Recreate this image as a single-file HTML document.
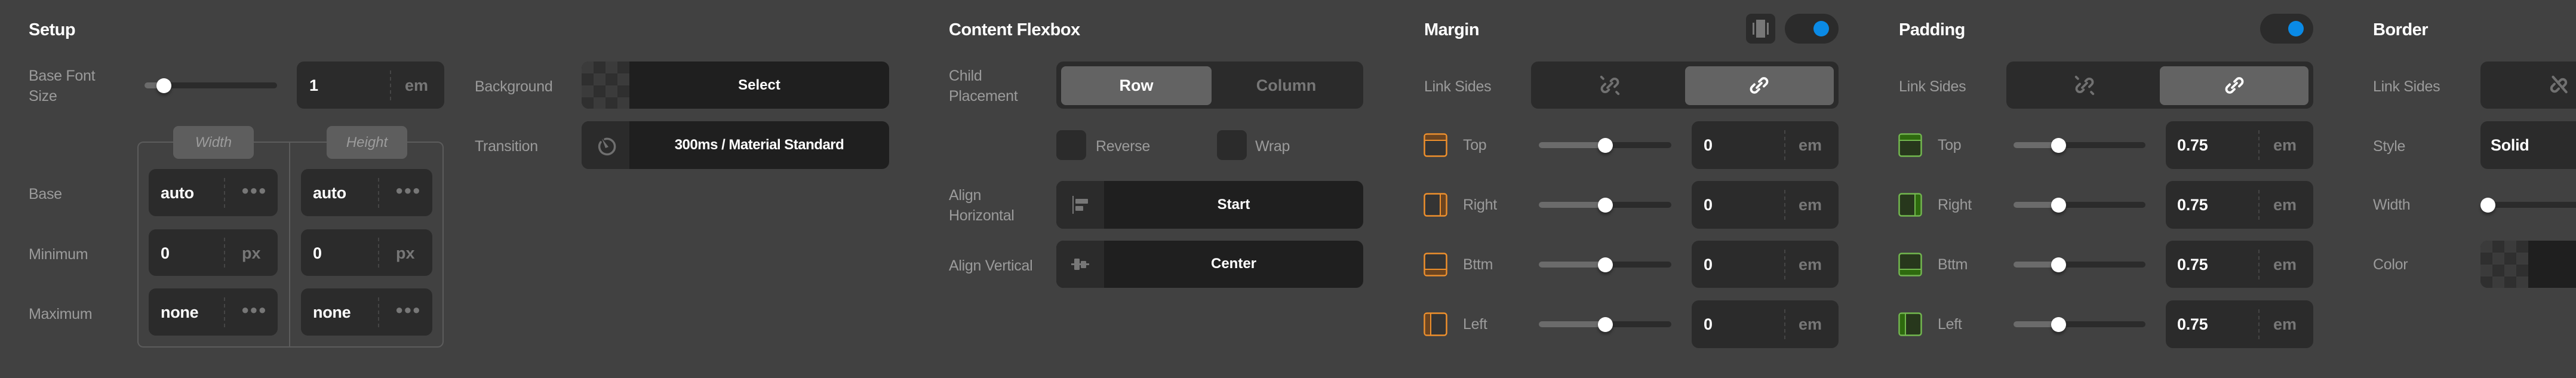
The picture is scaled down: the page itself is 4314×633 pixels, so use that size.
<!DOCTYPE html>
<html><head><meta charset="utf-8">
<style>
*{margin:0;padding:0;box-sizing:border-box}
html,body{width:4314px;height:633px;overflow:hidden;background:#414141;font-family:"Liberation Sans",sans-serif}
.a{position:absolute}
.t{position:absolute;color:#fff;font-weight:bold;font-size:29px;line-height:34px;top:33px;letter-spacing:-0.5px}
.l{position:absolute;color:#9b9b9b;font-size:25px;line-height:34px;letter-spacing:-0.3px;white-space:nowrap}
.box{position:absolute;background:#2b2b2b;border-radius:12px}
.dk{position:absolute;background:#1f1f1f;border-radius:12px;overflow:hidden}
.v{position:absolute;color:#fff;font-weight:bold;font-size:27px;line-height:34px;letter-spacing:-0.3px}
.u{position:absolute;color:#777;font-weight:bold;font-size:27px;line-height:34px}
.dots{position:absolute;color:#777;font-size:22px;line-height:34px;letter-spacing:1px}
.dv{position:absolute;width:0;border-left:2px dashed #454545}
.tr{position:absolute;height:10px;border-radius:5px;background:#2b2b2b;overflow:hidden}
.fi{position:absolute;left:0;top:0;height:10px;background:#6b6b6b}
.th{position:absolute;width:25px;height:25px;border-radius:50%;background:#fff;box-shadow:0 4px 5px rgba(0,0,0,.35)}
.ck{background:repeating-conic-gradient(#2f2f2f 0 25%,#3b3b3b 0 50%) 0 0/40px 40px}
.ctr{position:absolute;color:#fff;font-weight:bold;font-size:24px;line-height:34px;text-align:center;white-space:nowrap}
</style></head><body>

<!-- SETUP -->
<div class="t" style="left:48px">Setup</div>
<div class="l" style="left:48px;top:110px">Base Font<br>Size</div>
<div class="tr" style="left:242px;top:138px;width:222px"><div class="fi" style="width:32px"></div></div>
<div class="th" style="left:262px;top:131px"></div>
<div class="box" style="left:497px;top:103px;width:247px;height:79px"></div>
<div class="v" style="left:518px;top:126px">1</div>
<div class="dv" style="left:653px;top:118px;height:50px"></div>
<div class="u" style="left:678px;top:126px">em</div>

<div class="a" style="left:230px;top:237px;width:513px;height:345px;border:2px solid #5c5c5c;border-radius:10px"></div>
<div class="a" style="left:484px;top:237px;width:2px;height:345px;background:#5c5c5c"></div>
<div class="a" style="left:290px;top:211px;width:135px;height:55px;background:#5e5e5e;border-radius:9px;color:#9c9c9c;font-style:italic;font-size:24px;line-height:55px;text-align:center">Width</div>
<div class="a" style="left:547px;top:211px;width:135px;height:55px;background:#5e5e5e;border-radius:9px;color:#9c9c9c;font-style:italic;font-size:24px;line-height:55px;text-align:center">Height</div>

<div class="l" style="left:48px;top:308px">Base</div>
<div class="l" style="left:48px;top:409px">Minimum</div>
<div class="l" style="left:48px;top:509px">Maximum</div>

<div class="box" style="left:249px;top:283px;width:216px;height:79px"></div>
<div class="v" style="left:269px;top:306px">auto</div><div class="dv" style="left:375px;top:298px;height:50px"></div><div class="dots" style="left:404px;top:302px">●●●</div>
<div class="box" style="left:504px;top:283px;width:220px;height:79px"></div>
<div class="v" style="left:524px;top:306px">auto</div><div class="dv" style="left:633px;top:298px;height:50px"></div><div class="dots" style="left:662px;top:302px">●●●</div>

<div class="box" style="left:249px;top:384px;width:216px;height:78px"></div>
<div class="v" style="left:269px;top:407px">0</div><div class="dv" style="left:375px;top:398px;height:50px"></div><div class="u" style="left:405px;top:407px">px</div>
<div class="box" style="left:504px;top:384px;width:220px;height:78px"></div>
<div class="v" style="left:524px;top:407px">0</div><div class="dv" style="left:633px;top:398px;height:50px"></div><div class="u" style="left:663px;top:407px">px</div>

<div class="box" style="left:249px;top:483px;width:216px;height:79px"></div>
<div class="v" style="left:269px;top:506px">none</div><div class="dv" style="left:375px;top:498px;height:50px"></div><div class="dots" style="left:404px;top:502px">●●●</div>
<div class="box" style="left:504px;top:483px;width:220px;height:79px"></div>
<div class="v" style="left:524px;top:506px">none</div><div class="dv" style="left:633px;top:498px;height:50px"></div><div class="dots" style="left:662px;top:502px">●●●</div>

<div class="l" style="left:795px;top:128px">Background</div>
<div class="dk" style="left:974px;top:103px;width:515px;height:79px"><div class="a ck" style="left:0;top:0;width:80px;height:79px"></div></div>
<div class="ctr" style="left:1054px;top:126px;width:435px">Select</div>
<div class="l" style="left:795px;top:228px">Transition</div>
<div class="dk" style="left:974px;top:203px;width:515px;height:80px"><div class="a" style="left:0;top:0;width:80px;height:80px;background:#2b2b2b"></div></div>
<svg class="a" style="left:996px;top:222px" width="40" height="40" viewBox="0 0 40 40"><path d="M17 11 A13 13 0 1 1 10 16" fill="none" stroke="#6f6f6f" stroke-width="3.5" stroke-linecap="round"/><path d="M12 10 L23 24 L18 26 Z" fill="#6f6f6f"/></svg>
<div class="ctr" style="left:1054px;top:226px;width:435px;letter-spacing:-0.5px">300ms / Material Standard</div>

<!-- CONTENT FLEXBOX -->
<div class="t" style="left:1589px">Content Flexbox</div>
<div class="l" style="left:1589px;top:110px">Child<br>Placement</div>
<div class="box" style="left:1769px;top:103px;width:514px;height:79px"></div>
<div class="a" style="left:1777px;top:111px;width:252px;height:65px;background:#636363;border-radius:8px"></div>
<div class="ctr" style="left:1777px;top:126px;width:252px;font-size:27px">Row</div>
<div class="ctr" style="left:2029px;top:126px;width:250px;font-size:27px;color:#777">Column</div>
<div class="box" style="left:1769px;top:218px;width:50px;height:50px;border-radius:9px"></div>
<div class="l" style="left:1835px;top:228px">Reverse</div>
<div class="box" style="left:2038px;top:218px;width:50px;height:50px;border-radius:9px"></div>
<div class="l" style="left:2102px;top:228px">Wrap</div>

<div class="l" style="left:1589px;top:310px">Align<br>Horizontal</div>
<div class="dk" style="left:1769px;top:303px;width:514px;height:80px"><div class="a" style="left:0;top:0;width:80px;height:80px;background:#2b2b2b"></div></div>
<svg class="a" style="left:1769px;top:303px" width="80" height="80"><rect x="27" y="25" width="2" height="30" fill="#777"/><rect x="32" y="30" width="21" height="8" rx="1" fill="#777"/><rect x="32" y="42" width="13" height="8" rx="1" fill="#777"/></svg>
<div class="ctr" style="left:1849px;top:326px;width:434px">Start</div>
<div class="l" style="left:1589px;top:428px">Align Vertical</div>
<div class="dk" style="left:1769px;top:403px;width:514px;height:79px"><div class="a" style="left:0;top:0;width:80px;height:79px;background:#2b2b2b"></div></div>
<svg class="a" style="left:1769px;top:403px" width="80" height="79"><rect x="25" y="38" width="30" height="3" fill="#777"/><rect x="30" y="30" width="9" height="19" rx="1.5" fill="#777"/><rect x="41" y="34" width="9" height="12" rx="1.5" fill="#777"/></svg>
<div class="ctr" style="left:1849px;top:425px;width:434px">Center</div>

<!-- MARGIN -->
<div class="t" style="left:2385px">Margin</div>
<div class="box" style="left:2924px;top:23px;width:49px;height:50px;border-radius:9px"></div>
<svg class="a" style="left:2924px;top:23px" width="49" height="50"><rect x="11" y="15" width="3" height="20" fill="#777"/><rect x="17" y="10" width="15" height="30" fill="#777"/><rect x="35" y="15" width="3" height="20" fill="#777"/></svg>
<div class="box" style="left:2989px;top:23px;width:90px;height:50px;border-radius:25px"></div>
<div class="a" style="left:3037px;top:35px;width:26px;height:26px;border-radius:50%;background:#0a8ae6"></div>
<div class="l" style="left:2385px;top:128px">Link Sides</div>
<div class="box" style="left:2564px;top:103px;width:515px;height:79px"></div>
<div class="a" style="left:2822px;top:111px;width:249px;height:65px;background:#636363;border-radius:8px"></div>
<svg class="a" style="left:2677px;top:124px" width="38" height="38" viewBox="0 0 24 24" fill="none" stroke="#717171" stroke-width="2.4" stroke-linecap="round"><path d="M13 7.5l1.5-1.5a3.5 3.5 0 0 1 5 5L17 13.5"/><path d="M11 16.5L9.5 18a3.5 3.5 0 0 1-5-5L7 10.5"/><path d="M9.5 14.5l5-5"/><path d="M3 3l2 2M19 19l2 2"/></svg>
<svg class="a" style="left:2927px;top:124px" width="38" height="38" viewBox="0 0 24 24" fill="none" stroke="#fff" stroke-width="2.4" stroke-linecap="round"><path d="M12 8l2.5-2.5a3.5 3.5 0 0 1 5 5L17 13"/><path d="M12 16l-2.5 2.5a3.5 3.5 0 0 1-5-5L7 11"/><path d="M9.5 14.5l5-5"/></svg>

<svg class="a" style="left:2384px;top:223px" width="40" height="40"><rect x="1.5" y="1.5" width="37" height="37" rx="4" fill="#343434" stroke="#ee8f2c" stroke-width="2.5"/><rect x="3" y="3" width="34" height="8" fill="#6b4420"/><rect x="2" y="11" width="36" height="2" fill="#ee8f2c"/></svg>
<svg class="a" style="left:2384px;top:323px" width="40" height="40"><rect x="1.5" y="1.5" width="37" height="37" rx="4" fill="#343434" stroke="#ee8f2c" stroke-width="2.5"/><rect x="29" y="3" width="8" height="34" fill="#6b4420"/><rect x="27" y="2" width="2" height="36" fill="#ee8f2c"/></svg>
<svg class="a" style="left:2384px;top:423px" width="40" height="40"><rect x="1.5" y="1.5" width="37" height="37" rx="4" fill="#343434" stroke="#ee8f2c" stroke-width="2.5"/><rect x="3" y="29" width="34" height="8" fill="#6b4420"/><rect x="2" y="27" width="36" height="2" fill="#ee8f2c"/></svg>
<svg class="a" style="left:2384px;top:523px" width="40" height="40"><rect x="1.5" y="1.5" width="37" height="37" rx="4" fill="#343434" stroke="#ee8f2c" stroke-width="2.5"/><rect x="3" y="3" width="8" height="34" fill="#6b4420"/><rect x="11" y="2" width="2" height="36" fill="#ee8f2c"/></svg>
<div class="l" style="left:2450px;top:226px">Top</div>
<div class="l" style="left:2450px;top:326px">Right</div>
<div class="l" style="left:2450px;top:426px">Bttm</div>
<div class="l" style="left:2450px;top:526px">Left</div>

<div class="tr" style="left:2577px;top:238px;width:222px"><div class="fi" style="width:111px"></div></div><div class="th" style="left:2676px;top:231px"></div>
<div class="tr" style="left:2577px;top:338px;width:222px"><div class="fi" style="width:111px"></div></div><div class="th" style="left:2676px;top:331px"></div>
<div class="tr" style="left:2577px;top:438px;width:222px"><div class="fi" style="width:111px"></div></div><div class="th" style="left:2676px;top:431px"></div>
<div class="tr" style="left:2577px;top:538px;width:222px"><div class="fi" style="width:111px"></div></div><div class="th" style="left:2676px;top:531px"></div>

<div class="box" style="left:2833px;top:203px;width:246px;height:80px"></div><div class="v" style="left:2853px;top:226px">0</div><div class="dv" style="left:2988px;top:218px;height:50px"></div><div class="u" style="left:3012px;top:226px">em</div>
<div class="box" style="left:2833px;top:303px;width:246px;height:80px"></div><div class="v" style="left:2853px;top:326px">0</div><div class="dv" style="left:2988px;top:318px;height:50px"></div><div class="u" style="left:3012px;top:326px">em</div>
<div class="box" style="left:2833px;top:403px;width:246px;height:79px"></div><div class="v" style="left:2853px;top:426px">0</div><div class="dv" style="left:2988px;top:418px;height:50px"></div><div class="u" style="left:3012px;top:426px">em</div>
<div class="box" style="left:2833px;top:503px;width:246px;height:80px"></div><div class="v" style="left:2853px;top:526px">0</div><div class="dv" style="left:2988px;top:518px;height:50px"></div><div class="u" style="left:3012px;top:526px">em</div>

<!-- PADDING -->
<div class="t" style="left:3180px">Padding</div>
<div class="box" style="left:3785px;top:23px;width:89px;height:50px;border-radius:25px"></div>
<div class="a" style="left:3832px;top:35px;width:26px;height:26px;border-radius:50%;background:#0a8ae6"></div>
<div class="l" style="left:3180px;top:128px">Link Sides</div>
<div class="box" style="left:3360px;top:103px;width:514px;height:79px"></div>
<div class="a" style="left:3617px;top:111px;width:249px;height:65px;background:#636363;border-radius:8px"></div>
<svg class="a" style="left:3472px;top:124px" width="38" height="38" viewBox="0 0 24 24" fill="none" stroke="#717171" stroke-width="2.4" stroke-linecap="round"><path d="M13 7.5l1.5-1.5a3.5 3.5 0 0 1 5 5L17 13.5"/><path d="M11 16.5L9.5 18a3.5 3.5 0 0 1-5-5L7 10.5"/><path d="M9.5 14.5l5-5"/><path d="M3 3l2 2M19 19l2 2"/></svg>
<svg class="a" style="left:3723px;top:124px" width="38" height="38" viewBox="0 0 24 24" fill="none" stroke="#fff" stroke-width="2.4" stroke-linecap="round"><path d="M12 8l2.5-2.5a3.5 3.5 0 0 1 5 5L17 13"/><path d="M12 16l-2.5 2.5a3.5 3.5 0 0 1-5-5L7 11"/><path d="M9.5 14.5l5-5"/></svg>

<svg class="a" style="left:3179px;top:223px" width="40" height="40"><rect x="1.5" y="1.5" width="37" height="37" rx="4" fill="#27371c" stroke="#72b84e" stroke-width="2.5"/><rect x="3" y="3" width="34" height="8" fill="#2e6a0e"/><rect x="2" y="11" width="36" height="2" fill="#72b84e"/></svg>
<svg class="a" style="left:3179px;top:323px" width="40" height="40"><rect x="1.5" y="1.5" width="37" height="37" rx="4" fill="#27371c" stroke="#72b84e" stroke-width="2.5"/><rect x="29" y="3" width="8" height="34" fill="#2e6a0e"/><rect x="27" y="2" width="2" height="36" fill="#72b84e"/></svg>
<svg class="a" style="left:3179px;top:423px" width="40" height="40"><rect x="1.5" y="1.5" width="37" height="37" rx="4" fill="#27371c" stroke="#72b84e" stroke-width="2.5"/><rect x="3" y="29" width="34" height="8" fill="#2e6a0e"/><rect x="2" y="27" width="36" height="2" fill="#72b84e"/></svg>
<svg class="a" style="left:3179px;top:523px" width="40" height="40"><rect x="1.5" y="1.5" width="37" height="37" rx="4" fill="#27371c" stroke="#72b84e" stroke-width="2.5"/><rect x="3" y="3" width="8" height="34" fill="#2e6a0e"/><rect x="11" y="2" width="2" height="36" fill="#72b84e"/></svg>
<div class="l" style="left:3245px;top:226px">Top</div>
<div class="l" style="left:3245px;top:326px">Right</div>
<div class="l" style="left:3245px;top:426px">Bttm</div>
<div class="l" style="left:3245px;top:526px">Left</div>

<div class="tr" style="left:3372px;top:238px;width:221px"><div class="fi" style="width:70px"></div></div><div class="th" style="left:3435px;top:231px"></div>
<div class="tr" style="left:3372px;top:338px;width:221px"><div class="fi" style="width:70px"></div></div><div class="th" style="left:3435px;top:331px"></div>
<div class="tr" style="left:3372px;top:438px;width:221px"><div class="fi" style="width:70px"></div></div><div class="th" style="left:3435px;top:431px"></div>
<div class="tr" style="left:3372px;top:538px;width:221px"><div class="fi" style="width:70px"></div></div><div class="th" style="left:3435px;top:531px"></div>

<div class="box" style="left:3627px;top:203px;width:247px;height:80px"></div><div class="v" style="left:3646px;top:226px">0.75</div><div class="dv" style="left:3782px;top:218px;height:50px"></div><div class="u" style="left:3807px;top:226px">em</div>
<div class="box" style="left:3627px;top:303px;width:247px;height:80px"></div><div class="v" style="left:3646px;top:326px">0.75</div><div class="dv" style="left:3782px;top:318px;height:50px"></div><div class="u" style="left:3807px;top:326px">em</div>
<div class="box" style="left:3627px;top:403px;width:247px;height:79px"></div><div class="v" style="left:3646px;top:426px">0.75</div><div class="dv" style="left:3782px;top:418px;height:50px"></div><div class="u" style="left:3807px;top:426px">em</div>
<div class="box" style="left:3627px;top:503px;width:247px;height:80px"></div><div class="v" style="left:3646px;top:526px">0.75</div><div class="dv" style="left:3782px;top:518px;height:50px"></div><div class="u" style="left:3807px;top:526px">em</div>

<!-- BORDER -->
<div class="t" style="left:3974px">Border</div>
<div class="l" style="left:3974px;top:128px">Link Sides</div>
<div class="box" style="left:4154px;top:103px;width:200px;height:79px"></div>
<svg class="a" style="left:4266px;top:124px" width="38" height="38" viewBox="0 0 24 24" fill="none" stroke="#717171" stroke-width="2.6" stroke-linecap="round"><path d="M12 8.5l2-2a3.3 3.3 0 0 1 4.7 4.7L16.5 13.5"/><path d="M12 15.5l-2 2a3.3 3.3 0 0 1-4.7-4.7L7.5 10.5"/><path d="M6 3l14 16"/></svg>
<div class="l" style="left:3974px;top:228px">Style</div>
<div class="box" style="left:4154px;top:203px;width:200px;height:80px"></div>
<div class="v" style="left:4171px;top:226px">Solid</div>
<div class="l" style="left:3974px;top:326px">Width</div>
<div class="tr" style="left:4160px;top:338px;width:200px"></div><div class="th" style="left:4154px;top:331px"></div>
<div class="l" style="left:3974px;top:426px">Color</div>
<div class="dk" style="left:4154px;top:403px;width:200px;height:79px"><div class="a ck" style="left:0;top:0;width:80px;height:79px"></div></div>

</body></html>
